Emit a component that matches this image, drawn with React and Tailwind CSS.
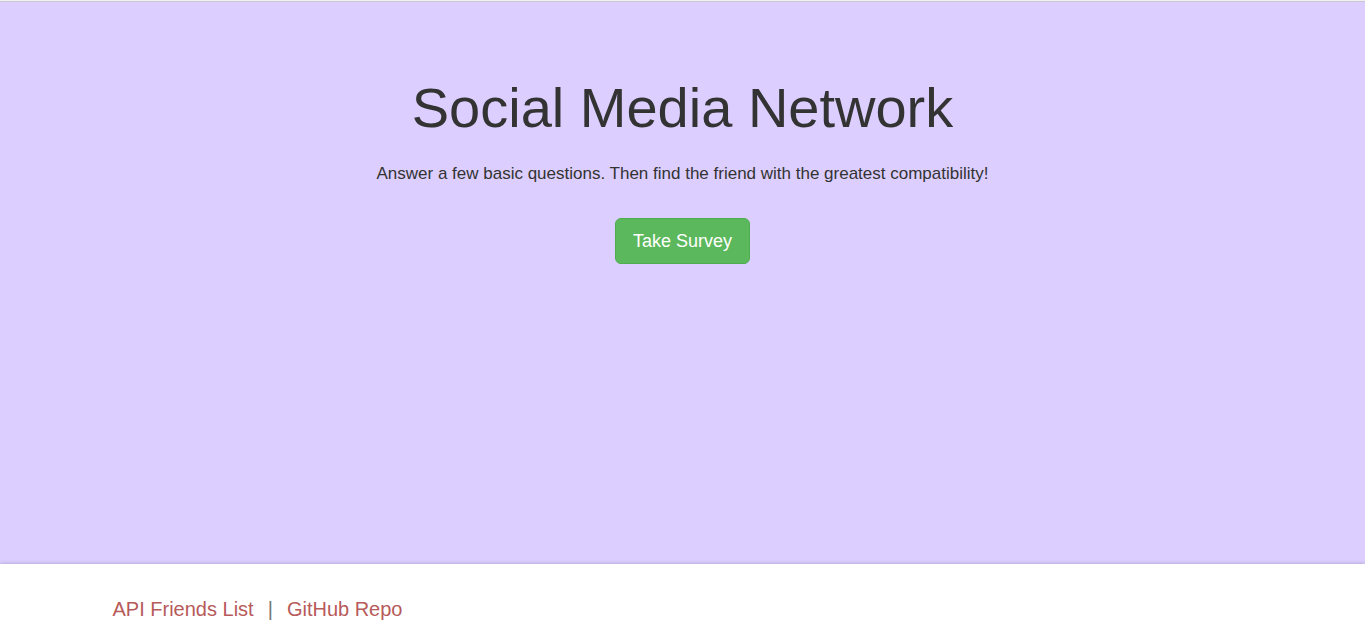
export default function App() {
  return (
    <div className="flex min-h-screen flex-col border-t border-[#f0f0f0] bg-[#dccfff] font-['Liberation_Sans',Arial,sans-serif] text-[#333333]">
      <main className="flex flex-1 flex-col items-center border-t border-[#cbc5d6] px-4 pt-[74px] text-center">
        <h1 className="text-[56px] leading-[64px]">Social Media Network</h1>
        <p className="mt-[22px] text-[17px] leading-6">
          Answer a few basic questions. Then find the friend with the greatest compatibility!
        </p>
        <a
          href="#survey"
          className="mt-8 rounded-md border border-[#4cae4c] bg-[#5cb85c] px-[17px] py-2.5 text-lg leading-6 text-white"
        >
          Take Survey
        </a>
      </main>
      <footer className="bg-white px-4 pt-8 pb-4 text-xl leading-[26px] shadow-[0_0_4px_rgba(0,0,0,0.25)]">
        <nav className="mx-auto flex max-w-[1140px] gap-3.5 text-[#777777]">
          <a href="#friends" className="text-[#b75a5a]">API Friends List</a>
          <span>|</span>
          <a href="#repo" className="text-[#b75a5a]">GitHub Repo</a>
        </nav>
      </footer>
    </div>
  );
}
